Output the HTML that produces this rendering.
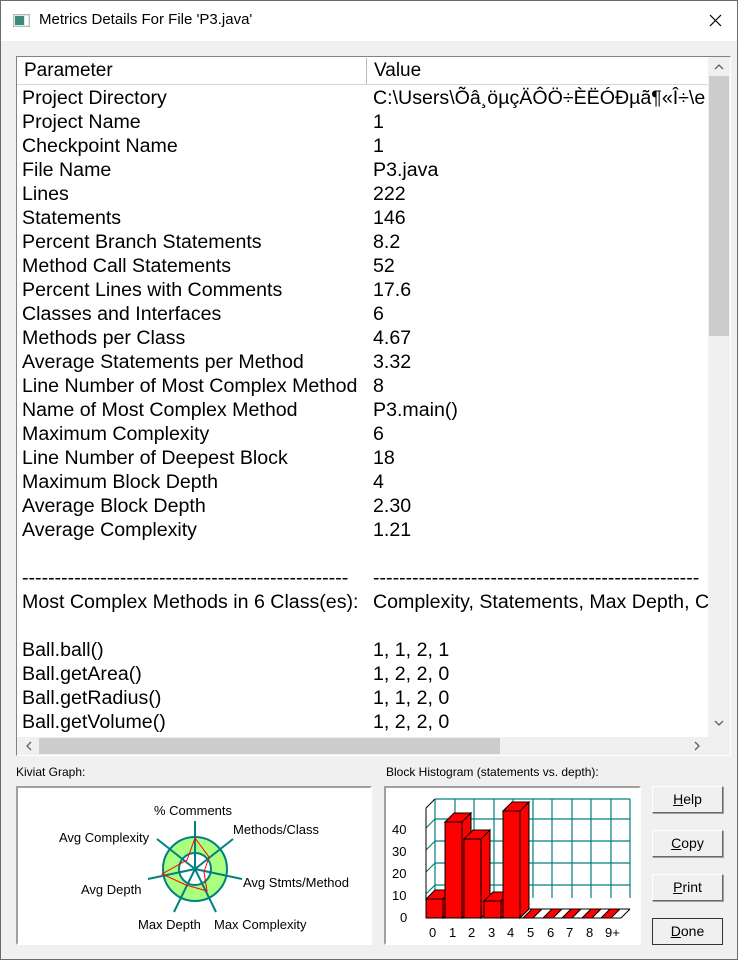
<!DOCTYPE html><html><head><style>
body{margin:0;width:738px;height:960px;background:#f0f0f0;font-family:"Liberation Sans",Arial,sans-serif;position:relative;overflow:hidden}
.win{position:absolute;left:0;top:0;width:736px;height:958px;border:1px solid #6b6b6b;background:#f0f0f0}
.title{position:absolute;left:0;top:0;width:736px;height:40px;background:#fff}
.title span{position:absolute;left:38px;top:10px;font-size:15px;color:#000;font-family:"Liberation Sans","Noto Sans CJK SC",sans-serif}
.list{position:absolute;left:15px;top:55px;width:713px;height:698px;border:1px solid #828282;border-right-color:#fff;border-bottom-color:#fff;background:#fff;overflow:hidden}
.hdr{position:absolute;left:0;top:1px;width:691px;height:26px;background:#fff;border-bottom:1px solid #d5d5d5}
.hdr div{position:absolute;top:0;height:26px;font-size:19px;line-height:26px}
.row{position:absolute;font-size:19.6px;white-space:nowrap;line-height:24px}
.vs{position:absolute;left:691px;top:0;width:22px;height:680px;background:#f0f0f0}
.hs{position:absolute;left:0;top:680px;width:691px;height:18px;background:#f0f0f0}
.lbl{position:absolute;font-size:12px}
.box{position:absolute;border:2px solid #a0a0a0;border-right-color:#fff;border-bottom-color:#fff;background:#fff}
.btn{position:absolute;left:651px;width:69px;height:25px;border:1px solid #fff;border-right-color:#696969;border-bottom-color:#696969;box-shadow:1px 1px 0 #a0a0a0;background:#f0f0f0;font-size:14px;text-align:center;line-height:25px}
</style></head><body><div class="win">
<div class="title"><svg style="position:absolute;left:12px;top:13px" width="17" height="13"><rect x="0" y="0" width="17" height="13" fill="#dfe6e6" stroke="#8a9a9a"/><rect x="2" y="2" width="9" height="9" fill="#3b8a7a"/><rect x="12" y="2" width="3" height="9" fill="#fff"/></svg><span>Metrics Details For File 'P3.java'</span>
<svg style="position:absolute;left:708px;top:13px" width="13" height="13"><path d="M1 1L12 12M12 1L1 12" stroke="#000" stroke-width="1.2"/></svg></div>
<div class="list">
<div class="hdr"><div style="left:7px">Parameter</div><div style="left:349px;border-left:1px solid #bbb;padding-left:7px;width:340px">Value</div></div>
<div class="row" style="left:5px;top:29px">Project Directory<br>Project Name<br>Checkpoint Name<br>File Name<br>Lines<br>Statements<br>Percent Branch Statements<br>Method Call Statements<br>Percent Lines with Comments<br>Classes and Interfaces<br>Methods per Class<br>Average Statements per Method<br>Line Number of Most Complex Method<br>Name of Most Complex Method<br>Maximum Complexity<br>Line Number of Deepest Block<br>Maximum Block Depth<br>Average Block Depth<br>Average Complexity<br><br>--------------------------------------------------<br>Most Complex Methods in 6 Class(es):<br><br>Ball.ball()<br>Ball.getArea()<br>Ball.getRadius()<br>Ball.getVolume()</div>
<div class="row" style="left:356px;top:29px;width:335px;overflow:hidden">C:\Users\Õâ¸öµçÄÔÖ÷ÈËÓÐµã¶«Î÷\e<br>1<br>1<br>P3.java<br>222<br>146<br>8.2<br>52<br>17.6<br>6<br>4.67<br>3.32<br>8<br>P3.main()<br>6<br>18<br>4<br>2.30<br>1.21<br><br>--------------------------------------------------<br>Complexity, Statements, Max Depth, Calls<br><br>1, 1, 2, 1<br>1, 2, 2, 0<br>1, 1, 2, 0<br>1, 2, 2, 0</div>
<div class="vs"><div style="position:absolute;left:1px;top:19px;width:20px;height:260px;background:#cdcdcd"></div>
<svg style="position:absolute;left:6px;top:6px" width="10" height="7"><path d="M1 6L5 2L9 6" stroke="#606060" fill="none" stroke-width="1.3"/></svg>
<svg style="position:absolute;left:6px;top:663px" width="10" height="7"><path d="M1 1L5 5L9 1" stroke="#606060" fill="none" stroke-width="1.3"/></svg></div>
<div class="hs"><div style="position:absolute;left:22px;top:1px;width:461px;height:16px;background:#cdcdcd"></div>
<svg style="position:absolute;left:8px;top:4px" width="7" height="10"><path d="M6 1L2 5L6 9" stroke="#606060" fill="none" stroke-width="1.3"/></svg>
<svg style="position:absolute;left:677px;top:4px" width="7" height="10"><path d="M1 1L5 5L1 9" stroke="#606060" fill="none" stroke-width="1.3"/></svg></div>
<div style="position:absolute;left:691px;top:680px;width:22px;height:18px;background:#f0f0f0"></div>
</div>
<div class="lbl" style="left:15px;top:764px">Kiviat Graph:</div>
<div class="lbl" style="left:385px;top:764px">Block Histogram (statements vs. depth):</div>
<div class="box" style="left:15px;top:785px;width:352px;height:155px">
<svg width="352" height="155" style="position:absolute;left:0;top:0;font-family:'Liberation Sans',Arial;font-size:13px">
<g transform="translate(177,81)">
<circle r="24" fill="none" stroke="#aaff80" stroke-width="16"/>
<circle r="32" fill="none" stroke="#008080" stroke-width="2"/>
<circle r="16" fill="none" stroke="#008080" stroke-width="2"/>
<g stroke="#008080" stroke-width="2">
<line x1="0" y1="0" x2="0" y2="-48"/><line x1="0" y1="0" x2="38" y2="-30"/><line x1="0" y1="0" x2="47" y2="10"/><line x1="0" y1="0" x2="21" y2="43"/><line x1="0" y1="0" x2="-21" y2="43"/><line x1="0" y1="0" x2="-47" y2="10"/><line x1="0" y1="0" x2="-38" y2="-30"/></g>
<polygon points="0,-31 14,-12 9,3 12,22 -9,16 -33,5 -8,-9" fill="none" stroke="#f00" stroke-width="1"/>
</g>
<text x="136" y="27">% Comments</text><text x="215" y="46">Methods/Class</text><text x="225" y="99">Avg Stmts/Method</text><text x="196" y="141">Max Complexity</text><text x="120" y="141">Max Depth</text><text x="63" y="106">Avg Depth</text><text x="41" y="54">Avg Complexity</text>
</svg></div>
<div class="box" style="left:383px;top:785px;width:253px;height:155px">
<svg width="253" height="155" style="position:absolute;left:0;top:0;font-family:'Liberation Sans',Arial;font-size:13px">
<g stroke="#008080" stroke-width="1.2" fill="none">
<path d="M49 11V110M69 11V110M88 11V110M108 11V110M127 11V110M147 11V110M166 11V110M186 11V110M205 11V110M225 11V110M244 11V110"/>
<path d="M49 11H244M49 31H244M49 53H244M49 75H244M49 97H244"/>
<path d="M40 40L49 31M40 62L49 53M40 84L49 75M40 106L49 97"/>
</g>
<path d="M40 20L49 11M40 20V130M40 130L49 121H244M40 130L235 130L244 121" stroke="#000" fill="none"/>
<g fill="#f00" stroke="#000" stroke-width="1">
<rect x="40" y="111" width="17" height="19"/><path d="M40 111L49 102H66L57 111ZM57 111L66 102V121L57 130Z"/>
<rect x="59" y="34" width="17" height="96"/><path d="M59 34L68 25H85L76 34ZM76 34L85 25V121L76 130Z"/>
<rect x="78" y="51" width="17" height="79"/><path d="M78 51L87 42H104L95 51ZM95 51L104 42V121L95 130Z"/>
<rect x="98" y="113" width="17" height="17"/><path d="M98 113L107 104H124L115 113ZM115 113L124 104V121L115 130Z"/>
<rect x="117" y="23" width="17" height="107"/><path d="M117 23L126 14H143L134 23ZM134 23L143 14V121L134 130Z"/>
<path d="M137 130L146 121H156L147 130ZM157 130L166 121H176L167 130ZM176 130L185 121H195L186 130ZM196 130L205 121H215L206 130ZM215 130L224 121H234L225 130Z"/>
</g>
<g fill="#000" font-size="13"><text x="14" y="134">0</text><text x="6" y="112">10</text><text x="6" y="90">20</text><text x="6" y="68">30</text><text x="6" y="46">40</text>
<text x="43" y="149">0</text><text x="63" y="149">1</text><text x="82" y="149">2</text><text x="102" y="149">3</text><text x="121" y="149">4</text><text x="141" y="149">5</text><text x="161" y="149">6</text><text x="180" y="149">7</text><text x="200" y="149">8</text><text x="219" y="149">9+</text></g>
</svg></div>
<div class="btn" style="top:785px"><u>H</u>elp</div>
<div class="btn" style="top:829px"><u>C</u>opy</div>
<div class="btn" style="top:873px"><u>P</u>rint</div>
<div class="btn" style="top:917px;border:1px solid #333;box-shadow:none"><u>D</u>one</div>
</div></body></html>
